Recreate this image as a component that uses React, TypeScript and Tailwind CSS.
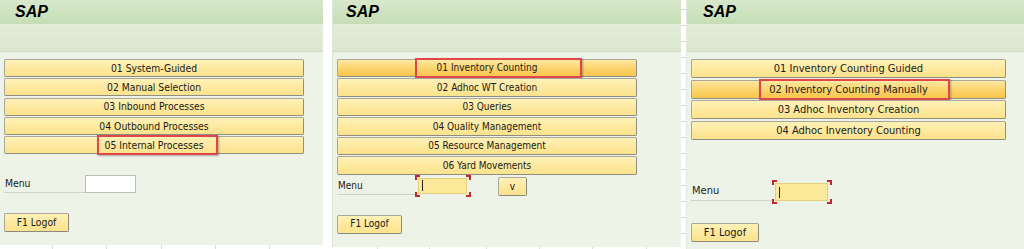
import React from "react";

const FONT = "font-['DejaVu_Sans_Condensed','DejaVu_Sans',sans-serif]";

type BoxSpec = { left: number; width: number };

function MenuButton({
  label,
  hl,
  box,
  h,
  ts,
}: {
  label: string;
  hl?: boolean;
  box?: BoxSpec;
  h: string;
  ts: string;
}) {
  return (
    <div
      className={`relative flex items-center justify-center rounded-[2px] border border-[#a9a79c] border-b-[#8f8d84] border-r-[#8f8d84] text-[#1a1a1a] ${ts} ${h} ${
        hl
          ? "bg-[linear-gradient(#fde9a2,#fbd36a_55%,#f8c64e)]"
          : "bg-[linear-gradient(#fff1b8,#fde9a0_50%,#fbe28c)]"
      }`}
    >
      <span className="leading-none">{label}</span>
      {box && (
        <div
          className="absolute top-[-2px] bottom-[-2px] border-2 border-[#e0464a] shadow-[1px_1px_2px_rgba(0,0,0,0.3)]"
          style={{ left: box.left, width: box.width }}
        />
      )}
    </div>
  );
}

function Bracket({ w, h }: { w: string; h: string }) {
  return (
    <div className={`relative shrink-0 ${w} ${h}`}>
      <div className="absolute left-0 top-0 w-[5px] h-[5px] border-l-2 border-t-2 border-[#c0282c]" />
      <div className="absolute right-0 top-0 w-[5px] h-[5px] border-r-2 border-t-2 border-[#c0282c]" />
      <div className="absolute left-0 bottom-0 w-[5px] h-[5px] border-l-2 border-b-2 border-[#c0282c]" />
      <div className="absolute right-0 bottom-0 w-[5px] h-[5px] border-r-2 border-b-2 border-[#c0282c]" />
      <div className="absolute left-[3px] right-[4px] top-[3px] bottom-[3px] bg-[#fde99a] border border-[#e4cf7c] flex items-center pl-[3px]">
        <div className="w-[1px] h-[11px] bg-[#222]" />
      </div>
    </div>
  );
}

function Header({ pl }: { pl: string }) {
  return (
    <>
      <div
        className={`h-[24px] shrink-0 bg-[linear-gradient(#d7e8cb,#c6ddb6)] flex items-center ${pl}`}
      >
        <span className="font-['Liberation_Sans',Arial,sans-serif] font-bold italic text-[16px] leading-none text-black">
          SAP
        </span>
      </div>
      <div className="h-[28px] shrink-0 bg-[linear-gradient(#e3edda,#dbe7d0)] border-b border-[#cfdbc4]" />
    </>
  );
}

function SmallBtn({ label, w, h, ts }: { label: string; w: string; h: string; ts: string }) {
  return (
    <div
      className={`flex items-center justify-center rounded-[2px] border border-[#a9a79c] border-b-[#8a887f] border-r-[#8a887f] bg-[linear-gradient(#fff1b8,#fde9a0_50%,#fbe28c)] text-[#1a1a1a] ${ts} ${w} ${h}`}
    >
      <span className="leading-none">{label}</span>
    </div>
  );
}

export default function App() {
  const p1 = [
    "01 System-Guided",
    "02 Manual Selection",
    "03 Inbound Processes",
    "04 Outbound Processes",
    "05 Internal Processes",
  ];
  const p2 = [
    "01 Inventory Counting",
    "02 Adhoc WT Creation",
    "03 Queries",
    "04 Quality Management",
    "05 Resource Management",
    "06 Yard Movements",
  ];
  const p3 = [
    "01 Inventory Counting Guided",
    "02 Inventory Counting Manually",
    "03 Adhoc Inventory Creation",
    "04 Adhoc Inventory Counting",
  ];

  return (
    <div className={`flex w-[1024px] h-[249px] bg-white overflow-hidden ${FONT}`}>
      {/* Panel 1 */}
      <div className="w-[323px] shrink-0 flex flex-col">
        <div className="h-[245px] flex flex-col bg-[#eef3e8]">
          <Header pl="pl-[15px]" />
          <div className="flex-1 flex flex-col pl-[4px] pr-[19px] pt-[7px]">
            <div className="flex flex-col gap-[1.25px]">
              {p1.map((l, i) => (
                <MenuButton
                  key={l}
                  label={l}
                  ts="text-[10.3px]"
                  h="h-[18px]"
                  box={i === 4 ? { left: 92, width: 121 } : undefined}
                />
              ))}
            </div>
            <div className="mt-[21px] flex items-center h-[18px]">
              <div className="w-[81px] h-[17px] flex items-center pl-[1px] text-[10.3px] text-[#1a1a1a] border-b border-[#cdd3c6]">
                Menu
              </div>
              <div className="w-[51px] h-[18px] bg-white border border-[#bdbdb5]" />
            </div>
            <div className="mt-[20px]">
              <SmallBtn label="F1 Logof" ts="text-[10.3px]" w="w-[65px]" h="h-[19px]" />
            </div>
          </div>
        </div>
        <div className="flex-1 flex">
          {[53, 54, 55, 54, 54].map((w, i) => (
            <div key={i} className="h-full border-r border-[#dcdcdc]" style={{ width: w }} />
          ))}
        </div>
      </div>

      <div className="w-[9px] shrink-0 bg-white" />

      {/* Panel 2 */}
      <div className="w-[349px] shrink-0 flex flex-col">
        <div className="h-[247px] flex flex-col bg-[#eef3e8] border-l border-[#dfe6d8]">
          <Header pl="pl-[13px]" />
          <div className="flex-1 flex flex-col pl-[4px] pr-[44px] pt-[7px]">
            <div className="flex flex-col gap-[1.3px]">
              {p2.map((l, i) => (
                <MenuButton
                  key={l}
                  label={l}
                  ts="text-[10px]"
                  hl={i === 0}
                  h="h-[18.2px]"
                  box={i === 0 ? { left: 77, width: 167 } : undefined}
                />
              ))}
            </div>
            <div className="flex items-center h-[22px]">
              <div className="w-[78px] h-[18px] flex items-center pl-[1px] text-[10px] text-[#1a1a1a] border-b border-[#cdd3c6]">
                Menu
              </div>
              <Bracket w="w-[56px]" h="h-[22px]" />
              <div className="ml-[27px] mt-[2px]">
                <SmallBtn label="v" ts="text-[10px]" w="w-[29px]" h="h-[19px]" />
              </div>
            </div>
            <div className="mt-[18px]">
              <SmallBtn label="F1 Logof" ts="text-[10px]" w="w-[65px]" h="h-[19px]" />
            </div>
          </div>
        </div>
        <div className="flex-1 flex">
          {[46, 52, 57, 53, 53, 54].map((w, i) => (
            <div key={i} className="h-full border-r border-[#dcdcdc]" style={{ width: w }} />
          ))}
        </div>
      </div>

      {/* gap with ticks */}
      <div className="w-[5px] shrink-0 bg-white flex flex-col pt-[9px]">
        {Array.from({ length: 15 }).map((_, i) => (
          <div key={i} className="h-[16px] shrink-0 border-t border-[#d8d8d8]" />
        ))}
      </div>

      {/* Panel 3 */}
      <div className="flex-1 flex flex-col bg-[#eef3e8] border-l border-[#e2e8da]">
        <Header pl="pl-[16px]" />
        <div className="flex-1 flex flex-col pl-[4px] pr-[18px] pt-[7px]">
          <div className="flex flex-col gap-[1.7px]">
            {p3.map((l, i) => (
              <MenuButton
                key={l}
                label={l}
                ts="text-[11px]"
                hl={i === 1}
                h="h-[19px]"
                box={i === 1 ? { left: 67, width: 191 } : undefined}
              />
            ))}
          </div>
          <div className="mt-[40px] flex items-center h-[24px]">
            <div className="w-[81px] h-[18px] flex items-center pl-[1px] text-[11px] text-[#1a1a1a] border-b border-[#cdd3c6]">
              Menu
            </div>
            <Bracket w="w-[60px]" h="h-[24px]" />
          </div>
          <div className="mt-[19px]">
            <SmallBtn label="F1 Logof" ts="text-[11px]" w="w-[68px]" h="h-[19px]" />
          </div>
        </div>
      </div>
    </div>
  );
}
